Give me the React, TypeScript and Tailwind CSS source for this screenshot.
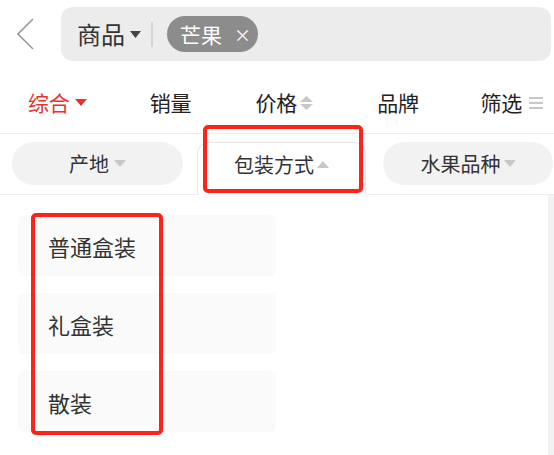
import React from "react";

const font = { fontFamily: '"Noto Sans CJK SC", "Noto Sans", sans-serif' };

function Down({ color = "#c8c8c8" }: { color?: string }) {
  return (
    <svg width="12" height="7" viewBox="0 0 12 7" className="shrink-0">
      <polygon points="0,0 12,0 6,7" fill={color} />
    </svg>
  );
}
function Up({ color = "#c8c8c8" }: { color?: string }) {
  return (
    <svg width="12" height="7" viewBox="0 0 12 7" className="shrink-0">
      <polygon points="0,7 12,7 6,0" fill={color} />
    </svg>
  );
}

export default function App() {
  return (
    <div
      className="relative w-[554px] h-[455px] overflow-hidden bg-white text-[#333]"
      style={font}
    >
      {/* header */}
      <div className="flex items-start h-[68px] pt-[7px]">
        <div className="w-[61px] h-[54px] flex items-center pl-[17px]">
          <svg width="18" height="32" viewBox="0 0 18 32">
            <polyline
              points="16,1 1,16 16,31"
              fill="none"
              stroke="#9a9a9a"
              strokeWidth="1.6"
            />
          </svg>
        </div>
        <div className="w-[490px] h-[54px] rounded-[12px] bg-[#ececec] flex items-center pl-[16px]">
          <span className="text-[24px] leading-none text-[#333]">商品</span>
          <span className="ml-[5px]">
            <svg width="11" height="7" viewBox="0 0 11 7">
              <polygon points="0,0 11,0 5.5,7" fill="#444" />
            </svg>
          </span>
          <span className="ml-[10px] w-[2px] h-[25px] bg-[#d4d4d4]" />
          <span className="ml-[14px] h-[36px] w-[91px] rounded-full bg-[#8c8c8c] flex items-center pl-[13px] text-white">
            <span className="text-[21px] leading-none">芒果</span>
            <span className="ml-[12px] text-[17px] leading-none">×</span>
          </span>
        </div>
      </div>

      {/* sort tabs */}
      <div className="flex items-center h-[66px] pt-[4px] border-b border-[#ececec]">
        <div className="w-[113.75px] shrink-0 flex items-center justify-center pl-[1px] text-[#e8322f]">
          <span className="text-[21px] leading-none">综合</span>
          <span className="ml-[5px]">
            <Down color="#e8322f" />
          </span>
        </div>
        <div className="w-[113.75px] shrink-0 flex items-center justify-center text-[#222]">
          <span className="text-[21px] leading-none">销量</span>
        </div>
        <div className="w-[113.75px] shrink-0 flex items-center justify-center text-[#222]">
          <span className="text-[21px] leading-none">价格</span>
          <span className="ml-[3px] flex flex-col gap-[1px]">
            <svg width="13" height="14" viewBox="0 0 13 14">
              <polygon points="0,6 13,6 6.5,0" fill="#c8c8c8" />
              <polygon points="0,8 13,8 6.5,14" fill="#c8c8c8" />
            </svg>
          </span>
        </div>
        <div className="w-[113.75px] shrink-0 flex items-center justify-center text-[#222]">
          <span className="text-[21px] leading-none">品牌</span>
        </div>
        <div className="w-[113.75px] shrink-0 flex items-center justify-center text-[#222]">
          <span className="text-[21px] leading-none">筛选</span>
          <span className="ml-[7px]">
            <svg width="14" height="12" viewBox="0 0 14 12">
              <rect x="0" y="0" width="14" height="2" fill="#c8c8c8" />
              <rect x="0" y="5" width="14" height="2" fill="#c8c8c8" />
              <rect x="0" y="10" width="14" height="2" fill="#c8c8c8" />
            </svg>
          </span>
        </div>
      </div>

      {/* filter row */}
      <div className="flex items-start h-[61px] border-b border-[#ececec] pl-[12px] pt-[8px]">
        <div className="w-[171px] h-[43px] rounded-full bg-[#f2f2f2] flex items-center justify-center">
          <span className="text-[20px] leading-none">产地</span>
          <span className="ml-[5px]">
            <Down />
          </span>
        </div>
        <div className="relative z-10 ml-[14px] w-[169px] h-[53px] rounded-t-[12px] border border-b-0 border-[#e6e6e6] bg-white flex items-start justify-center pt-[12px]">
          <span className="text-[20px] leading-none">包装方式</span>
          <span className="ml-[3px] mt-[6px]">
            <Up />
          </span>
        </div>
        <div className="ml-[17px] w-[170px] h-[43px] rounded-full bg-[#f2f2f2] flex items-center justify-center">
          <span className="text-[20px] leading-none">水果品种</span>
          <span className="ml-[3px]">
            <Down />
          </span>
        </div>
      </div>

      {/* panel */}
      <div className="flex h-[260px]">
        <div className="w-[548px] flex flex-col gap-[17px] pt-[20px] pl-[18px]">
          {["普通盒装", "礼盒装", "散装"].map((t) => (
            <div
              key={t}
              className="w-[258px] h-[61px] rounded-[6px] bg-[#fafafa] flex items-center pl-[30px]"
            >
              <span className="text-[22px] leading-none text-[#333]">{t}</span>
            </div>
          ))}
        </div>
        <div className="flex-1 bg-[#f2f2f2]" />
      </div>

      {/* annotation boxes */}
      <div className="absolute z-20 left-[203px] top-[125px] w-[160px] h-[68px] border-4 border-[#ff2218] rounded-[5px]" />
      <div className="absolute z-20 left-[31px] top-[213px] w-[132px] h-[222px] border-4 border-[#ff2218] rounded-[5px]" />
    </div>
  );
}
